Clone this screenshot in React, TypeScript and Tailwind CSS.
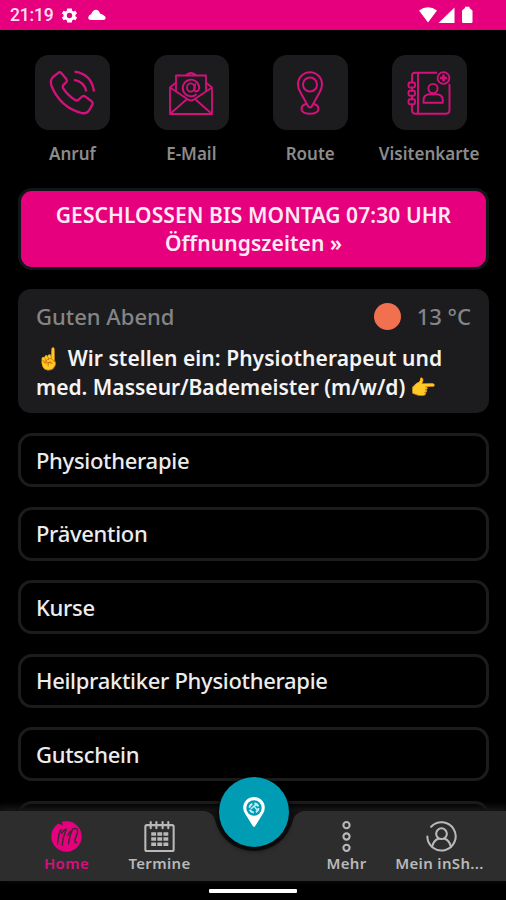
import React from "react";

const services = ["Physiotherapie", "Prävention", "Kurse", "Heilpraktiker Physiotherapie", "Gutschein", ""];

function PhoneIcon() {
  return (
    <svg viewBox="0 0 48 48" className="size-12" fill="none" stroke="#d5107c" strokeWidth="2.3" strokeLinecap="butt" strokeLinejoin="round">
      <path d="M5 8 L10.300 3.800 Q12 2.600 13.500 4.200 L18.300 9.900 Q19.500 11.600 18.200 13.200 L15.100 16.400 Q14.300 17.700 15.100 19.200 Q20 26.900 27.500 31.200 Q29 32 30.300 30.900 L34.200 27.500 Q36 26.400 37.500 27.700 L43.800 32.500 Q45.400 34.100 44.200 35.900 L41 41.500 Q38.500 45 33.500 44 Q12.500 38.500 3.500 17 Q1.700 11 5 8Z" />
      <path d="M26.500 2.700 Q43.500 5 46 22.500" />
      <path d="M26 10.800 Q36.500 12.500 38.300 22.500" />
    </svg>
  );
}

function MailIcon() {
  return (
    <svg viewBox="0 0 48 48" className="size-12" fill="none" stroke="#d5107c" strokeWidth="1.8" strokeLinejoin="round">
      <path d="M9 13.500 L3 18.500 V45 H45 V18.500 L39 13.500" />
      <path d="M3 18.500 L21 30.500 Q24 32.500 27 30.500 L45 18.500 M3 45 L19.500 30.500 M45 45 L28.500 30.500" />
      <path d="M9 22 V6.500 H39 V22 M18.500 6.500 Q24 1.500 29.500 6.500" />
      <path d="M29.500 25.300 A8.300 8.300 0 1 1 32.300 18.300 Q32.200 22.500 29 22.500 Q27 22.200 27.600 19.500 L28.300 14.500" />
      <ellipse cx="23.700" cy="18.500" rx="3.700" ry="4.200" />
    </svg>
  );
}

function RouteIcon() {
  return (
    <svg viewBox="0 0 48 48" className="size-12" fill="none" stroke="#d5107c" strokeWidth="2" strokeLinejoin="round">
      <path d="M24 38.500 Q22.800 38.500 22 37 L14.500 23.500 Q12 19.500 12 15.200 A12 12 0 0 1 36 15.200 Q36 19.500 33.500 23.500 L26 37 Q25.200 38.500 24 38.500Z" />
      <circle cx="24" cy="15.500" r="7" />
      <path d="M20.500 34.800 Q15.500 36.300 15.500 39.800 C15.500 46.500 32.500 46.500 32.500 39.800 Q32.500 36.300 27.500 34.800" />
    </svg>
  );
}

function ContactIcon() {
  return (
    <svg viewBox="0 0 48 48" className="mr-[1px] size-12" fill="none" stroke="#d5107c" strokeWidth="1.9" strokeLinejoin="round">
      <path d="M7 13 V7 Q7 3.800 10.200 3.800 H32 M44.500 15 V41 Q44.500 44.700 41 44.700 H10.200 Q7 44.700 7 41 V35.500 M7 18.500 V21.500 M7 27 V30 M13 4 V44.700" />
      <rect x="3.500" y="13.500" width="6.500" height="5" rx="1.500" />
      <rect x="3.500" y="21.800" width="6.500" height="5" rx="1.500" />
      <rect x="3.500" y="30.200" width="6.500" height="5" rx="1.500" />
      <circle cx="38.500" cy="9" r="5.900" />
      <path d="M38.500 5.500 V12.500 M35 9 H42" strokeWidth="2.600" />
      <circle cx="28" cy="19.500" r="4.600" />
      <path d="M18.500 33.700 V31 Q18.800 25.300 25 25.300 H31 Q37.500 25.300 37.800 31 V33.700Z" />
    </svg>
  );
}

const actions = [
  { label: "Anruf", icon: <PhoneIcon /> },
  { label: "E-Mail", icon: <MailIcon /> },
  { label: "Route", icon: <RouteIcon /> },
  { label: "Visitenkarte", icon: <ContactIcon /> },
];

function StatusBar() {
  return (
    <header className="flex h-[30px] items-center justify-between bg-[#e6007e] pr-[33px] pl-[10px]">
      <div className="flex items-center">
        <span className="w-[50px] pt-[2px] font-['Roboto'] text-[17.500px] leading-none font-medium tracking-[-0.200px] text-[#ffe0f0]">21:19</span>
        <svg viewBox="0 0 24 24" className="size-[19px]" fill="#fff">
          <path fillRule="evenodd" d="M19.400 13a7.500 7.500 0 0 0 0-2l2.100-1.600-2-3.500-2.500 1a8 8 0 0 0-1.700-1L15 3.200H9l-.4 2.700a8 8 0 0 0-1.700 1l-2.500-1-2 3.500L4.600 11a7.500 7.500 0 0 0 0 2l-2.200 1.600 2 3.500 2.500-1a8 8 0 0 0 1.700 1l.4 2.700h6l.4-2.700a8 8 0 0 0 1.700-1l2.500 1 2-3.500ZM12 15.400a3.400 3.400 0 1 1 0-6.800 3.400 3.400 0 0 1 0 6.800Z" />
        </svg>
        <svg viewBox="0 0 18 12" className="ml-[9px] h-[12px] w-[18px]" fill="#fff">
          <path d="M3 11 Q0 11 .3 8.300 Q.8 5.600 3.200 5.300 Q4.700 1 8 .8 Q11 1 12 4.500 Q17.700 6.500 17.700 9 Q17.700 11 15 11Z" />
        </svg>
      </div>
      <svg viewBox="0 0 55 18" className="mr-[-1px] h-[18px] w-[55px]" fill="#fff">
        <path d="M0 4.500 Q9 -2 18 4.500 L9 16.500Z" />
        <path d="M35.500 1.500 V17 H19.500Z" />
        <path d="M46 .8 H50.500 V2 L53.500 4.500 V15.800 Q53.500 17 52.300 17 H44.200 Q43 17 43 15.800 V4.500 L46 2Z" />
      </svg>
    </header>
  );
}

function HomeIcon() {
  return (
    <svg viewBox="0 0 30 30" className="size-[31px]" fill="none">
      <circle cx="15" cy="15" r="14.700" fill="#e6007e" />
      <path d="M9.800 8.500 Q7 12 6.300 22.500 M10.800 23.500 Q11.500 15 14.800 8 M14.800 8 Q12 8.500 10.200 12 M17 22 Q17.800 14 20.500 9 M20.500 9 Q18 10 16 14 M21 7.700 Q26.300 6.300 25.700 10.500 Q25.300 13.500 23.300 17.500 Q22.300 21.500 24.800 20.800" stroke="#2d2d2e" strokeWidth="1.400" strokeLinecap="round" />
      <path d="M4 1.500 L11.500 4 L10 -.5Z" fill="#2d2d2e" />
    </svg>
  );
}

function CalendarIcon() {
  return (
    <svg viewBox="0 0 30 30" className="size-[31px]" fill="none" stroke="#b9b9ba" strokeWidth="2">
      <rect x="1.300" y="4" width="27.400" height="25" rx="1.500" />
      <path d="M6.500 1 V7 M12 1 V7 M18 1 V7 M23.500 1 V7" strokeLinecap="round" />
      <path d="M7 12.500 H23.500 M7 17.500 H23.500 M7 22.500 H23.500" strokeWidth="3.400" strokeDasharray="4.700 1.200" />
    </svg>
  );
}

function MoreIcon() {
  return (
    <svg viewBox="0 0 30 30" className="size-[31px]" fill="none" stroke="#b9b9ba" strokeWidth="2">
      <circle cx="15" cy="4" r="3" />
      <circle cx="15" cy="15" r="3" />
      <circle cx="15" cy="26" r="3" />
    </svg>
  );
}

function ProfileIcon() {
  return (
    <svg viewBox="0 0 30 30" className="ml-[3px] size-[31px]" fill="none" stroke="#b9b9ba" strokeWidth="2" strokeLinecap="round">
      <path d="M5 5.500 A13.700 13.700 0 1 1 1.300 15" />
      <circle cx="15" cy="12.300" r="5.200" />
      <path d="M5.800 25 Q7.500 18.500 12 17.200 M24.200 25 Q22.500 18.500 18 17.200" />
    </svg>
  );
}

function NavItem({ label, icon, active = false }: { label: string; icon: React.ReactNode; active?: boolean }) {
  return (
    <div className={active ? "flex w-[93px] flex-col items-center text-[#d5107c]" : "flex w-[93px] flex-col items-center text-[#b9b9ba]"}>
      {icon}
      <span className="mt-[1px] text-[15px] leading-[20px] font-semibold tracking-[0.350px] whitespace-nowrap">{label}</span>
    </div>
  );
}

export default function App() {
  return (
    <div className="flex h-[900px] w-[506px] flex-col overflow-hidden bg-black font-['Noto_Sans','Noto_Color_Emoji',sans-serif]">
      <StatusBar />
      <main className="flex min-h-0 flex-1 flex-col overflow-hidden pr-[17px] pl-[18px]">
        <div className="-mx-[5px] mt-[25px] grid shrink-0 grid-cols-[repeat(4,118.900px)]">
          {actions.map((a) => (
            <div key={a.label} className="flex flex-col items-center">
              <div className="flex h-[75px] w-[75px] items-center justify-center rounded-[14px] bg-[#1c1c1e]">{a.icon}</div>
              <span className="mt-[12px] text-[17px] leading-[24px] font-semibold whitespace-nowrap text-[#8b8b8c]">{a.label}</span>
            </div>
          ))}
        </div>
        <div className="mt-[22px] flex h-[82px] shrink-0 flex-col items-center justify-center rounded-[14px] border-[3px] border-[#111718] bg-[#e6007e] text-[21px] leading-[28.500px] font-semibold tracking-[0.080px] text-[#ffeaf5]">
          <span>GESCHLOSSEN BIS MONTAG 07:30 UHR</span>
          <span>Öffnungszeiten »</span>
        </div>
        <section className="mt-[19px] h-[124px] shrink-0 rounded-[13px] bg-[#1c1c1e] px-[18px] pt-[11px]">
          <div className="flex h-[32px] items-center text-[22px] font-medium text-[#858586]">
            <span className="flex-1">Guten Abend</span>
            <span className="mr-[16px] size-[27px] rounded-full bg-[#f07050]" />
            <span>13 °C</span>
          </div>
          <p className="mt-[12px] text-[21px] leading-[29px] font-semibold whitespace-nowrap text-[#f4f4f4]">
            <span className="tracking-[0.050px]">☝️ Wir stellen ein: Physiotherapeut und</span><br />med. Masseur/Bademeister (m/w/d) 👉
          </p>
        </section>
        <div className="mt-[20px] flex flex-col gap-[19.600px]">
          {services.map((s, i) => (
            <div key={i} className="flex h-[54px] shrink-0 items-center rounded-[14px] border-[3px] border-[#1c1c1d] px-[15px] text-[22px] font-medium tracking-[-0.300px] text-[#ececec]">{s}</div>
          ))}
        </div>
      </main>
      <nav className="relative flex h-[70px] shrink-0 justify-between bg-[#2d2d2e] px-[20px] pt-[10px] shadow-[0_-3px_6px_2px_#151515]">
        <svg viewBox="0 0 110 50" className="absolute top-0 left-[199px] h-[50px] w-[110px]">
          <path d="M0 -1 Q14 0 16 9 A40 40 0 0 0 94 9 Q96 0 110 -1Z" fill="#111112" />
        </svg>
        <div className="absolute -top-[34px] left-[219px] flex size-[70px] items-center justify-center rounded-full bg-[#009cb4] shadow-[0_2px_6px_#000]">
          <svg viewBox="0 0 24 32" className="h-[32px] w-[24px]">
            <path fill="#fff" d="M12 31 Q11 31 9.500 28 L3 17.500 Q1.200 14.500 1.200 11.700 A10.800 10.800 0 0 1 22.800 11.700 Q22.800 14.500 21 17.500 L14.500 28 Q13 31 12 31Z" />
            <circle cx="12" cy="12" r="7.700" fill="#009cb4" />
            <circle cx="12" cy="12" r="4.500" fill="none" stroke="#c4eef4" strokeWidth="1.800" strokeDasharray="5 2" />
            <path d="M9 13 L12 10 L15 14 M12 10 L15 9" stroke="#c4eef4" strokeWidth="1.300" fill="none" />
          </svg>
        </div>
        <div className="flex">
          <NavItem label="Home" icon={<HomeIcon />} active />
          <NavItem label="Termine" icon={<CalendarIcon />} />
        </div>
        <div className="flex">
          <NavItem label="Mehr" icon={<MoreIcon />} />
          <NavItem label="Mein inSh..." icon={<ProfileIcon />} />
        </div>
      </nav>
      <footer className="flex h-[19px] shrink-0 justify-center bg-black pt-[8px]">
        <div className="h-[4px] w-[88px] rounded-[1px] bg-white" />
      </footer>
    </div>
  );
}
